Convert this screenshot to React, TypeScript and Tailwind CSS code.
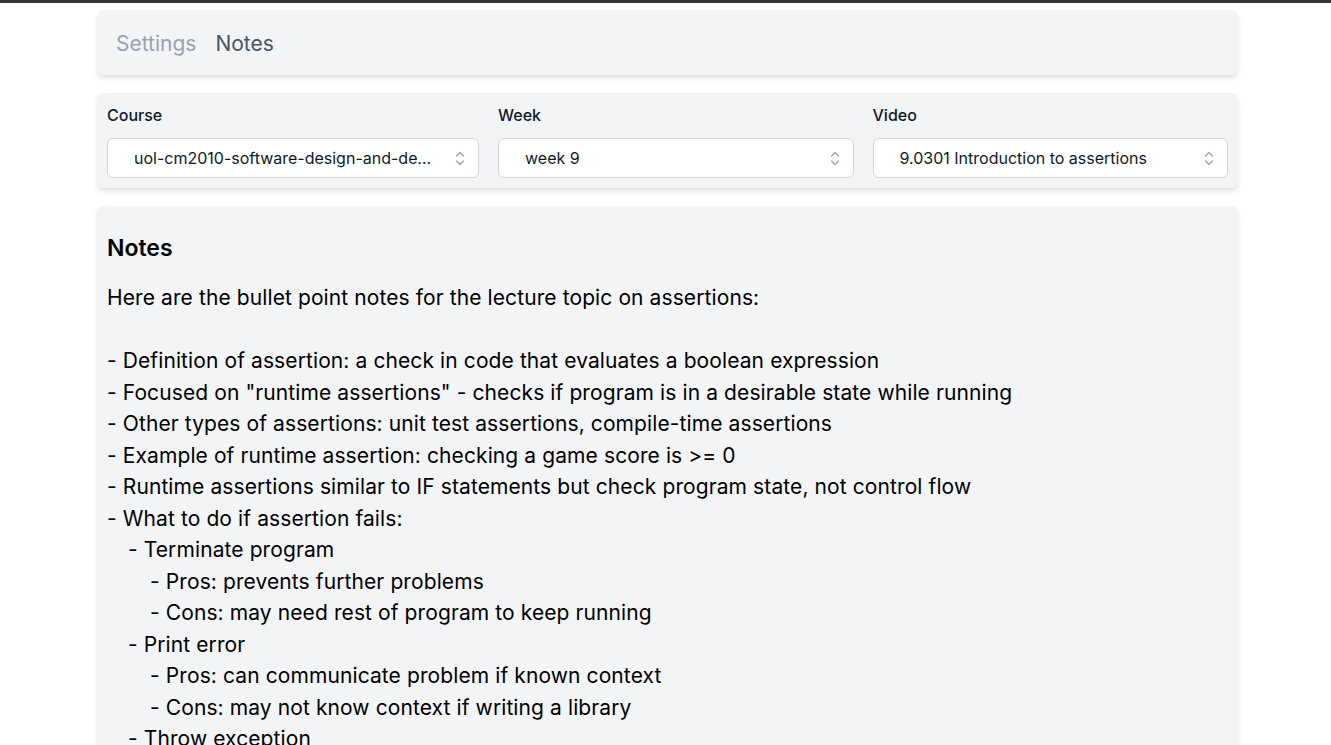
import React from "react";

const font = { fontFamily: "Inter, 'Noto Sans', sans-serif" };

type Line = { text: string; indent?: 0 | 1 | 2 };

const notes: Line[] = [
  { text: "Here are the bullet point notes for the lecture topic on assertions:" },
  { text: "" },
  { text: "- Definition of assertion: a check in code that evaluates a boolean expression" },
  { text: '- Focused on "runtime assertions" - checks if program is in a desirable state while running' },
  { text: "- Other types of assertions: unit test assertions, compile-time assertions" },
  { text: "- Example of runtime assertion: checking a game score is >= 0" },
  { text: "- Runtime assertions similar to IF statements but check program state, not control flow" },
  { text: "- What to do if assertion fails:" },
  { text: "- Terminate program", indent: 1 },
  { text: "- Pros: prevents further problems", indent: 2 },
  { text: "- Cons: may need rest of program to keep running", indent: 2 },
  { text: "- Print error", indent: 1 },
  { text: "- Pros: can communicate problem if known context", indent: 2 },
  { text: "- Cons: may not know context if writing a library", indent: 2 },
  { text: "- Throw exception", indent: 1 },
];

function UpDown() {
  return (
    <svg width="10" height="17" viewBox="0 0 10 17" fill="none" className="shrink-0">
      <path d="M1.5 6 L5 2.5 L8.5 6" stroke="#9ca3af" strokeWidth="1.3" strokeLinecap="round" strokeLinejoin="round" />
      <path d="M1.5 11 L5 14.5 L8.5 11" stroke="#9ca3af" strokeWidth="1.3" strokeLinecap="round" strokeLinejoin="round" />
    </svg>
  );
}

function Select({ label, value }: { label: string; value: string }) {
  return (
    <div className="flex flex-col min-w-0">
      <label className="text-[16px] leading-[22px] text-gray-900 font-medium">{label}</label>
      <div className="mt-[12px] h-[40px] bg-white border border-gray-300 rounded-md flex items-center pl-[26px] pr-[13px] gap-[20px]">
        <span className="flex-1 truncate text-[16px] text-gray-900">{value}</span>
        <UpDown />
      </div>
    </div>
  );
}

export default function App() {
  return (
    <div className="min-h-screen bg-white" style={font}>
      <div className="h-[3px] bg-[#353535]" />
      <div className="w-[1141px] ml-[97px] pt-[7px] flex flex-col gap-[18px]">
        {/* top tabs */}
        <nav className="h-[65px] bg-gray-100 rounded-md shadow-md flex items-center px-[19px] pt-[2px] gap-[19px] text-[21px]">
          <button className="text-gray-400">Settings</button>
          <button className="text-gray-600">Notes</button>
        </nav>

        {/* filters */}
        <div className="bg-gray-100 rounded-md shadow-md px-[10px] pt-[11px] pb-[10px] grid grid-cols-[372px_1fr_1fr] gap-[19px]">
          <Select label="Course" value="uol-cm2010-software-design-and-development" />
          <Select label="Week" value="week 9" />
          <Select label="Video" value="9.0301 Introduction to assertions" />
        </div>

        {/* notes */}
        <div className="bg-gray-100 rounded-md shadow-md px-[10px] pt-[27px] pb-[30px] text-black">
          <h2 className="text-[23px] leading-[30px] font-semibold">Notes</h2>
          <div className="mt-[19px] text-[21px] leading-[31.5px] tracking-[0.1px]">
            {notes.map((l, i) => (
              <div
                key={i}
                className={
                  l.indent === 2 ? "pl-[43px]" : l.indent === 1 ? "pl-[21px]" : ""
                }
              >
                {l.text || "\u00a0"}
              </div>
            ))}
          </div>
        </div>
      </div>
    </div>
  );
}
